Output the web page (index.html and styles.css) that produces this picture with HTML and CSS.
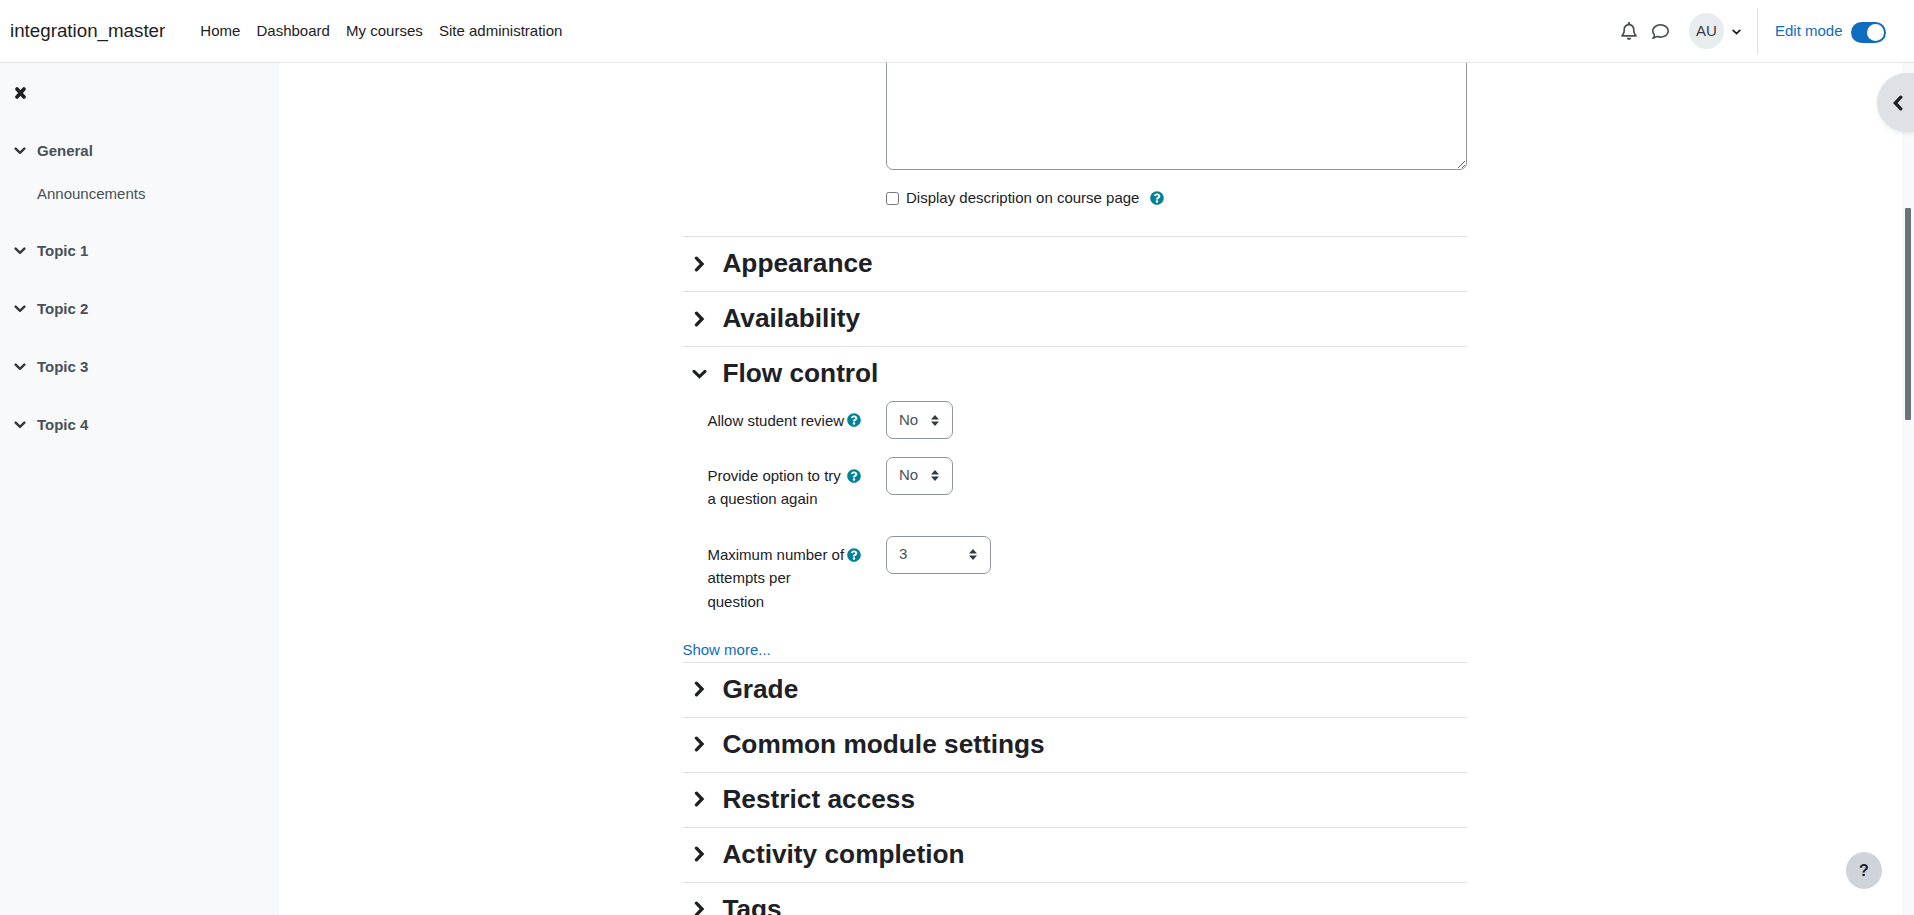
FILE: index.html
```html
<!DOCTYPE html>
<html lang="en">
<head>
<meta charset="utf-8">
<title>integration_master</title>
<link rel="stylesheet" href="styles.css">
</head>
<body>
<svg class="sprite" aria-hidden="true">
  <symbol id="chev-down" viewBox="0 0 16 10"><polyline points="2.2,2.2 8,7.8 13.8,2.2"/></symbol>
  <symbol id="chev-right" viewBox="0 0 10 16"><polyline points="2.2,2.2 7.8,8 2.2,13.8"/></symbol>
  <symbol id="chev-left" viewBox="0 0 10 16"><polyline points="7.8,2.2 2.2,8 7.8,13.8"/></symbol>
  <symbol id="help" viewBox="0 0 512 512"><path fill-rule="evenodd" d="M504 256c0 136.997-111.043 248-248 248S8 392.997 8 256C8 119.083 119.043 8 256 8s248 111.083 248 248zM262.655 90c-54.497 0-89.255 22.957-116.549 63.758-3.536 5.286-2.353 12.415 2.715 16.258l34.699 26.31c5.205 3.947 12.621 3.008 16.665-2.122 17.864-22.658 30.113-35.797 57.303-35.797 20.429 0 45.698 13.148 45.698 32.958 0 14.976-12.363 22.667-32.534 33.976C247.128 238.528 216 254.941 216 296v4c0 6.627 5.373 12 12 12h56c6.627 0 12-5.373 12-12v-1.333c0-28.462 83.186-29.647 83.186-106.667 0-58.002-60.165-102-116.531-102zM256 338c-25.365 0-46 20.635-46 46 0 25.364 20.635 46 46 46s46-20.636 46-46c0-25.365-20.635-46-46-46z"/></symbol>
</svg>

<header class="topbar">
  <a class="brand">integration_master</a>
  <nav class="primary-nav">
    <a>Home</a>
    <a>Dashboard</a>
    <a>My courses</a>
    <a>Site administration</a>
  </nav>
  <div class="usernav">
    <svg class="bell" viewBox="0 0 448 512"><path d="M224 0c-17.7 0-32 14.3-32 32V51.2C119 66 64 130.6 64 208v25.4c0 45.4-15.5 89.5-43.8 124.9L5.3 377c-5.8 7.2-6.9 17.1-2.9 25.4S14.8 416 24 416H424c9.2 0 17.6-5.3 21.6-13.6s2.9-18.2-2.9-25.4l-14.9-18.6C399.5 322.9 384 278.8 384 233.4V208c0-77.4-55-142-128-156.8V32c0-17.7-14.3-32-32-32zm0 96c61.9 0 112 50.1 112 112v25.4c0 47.9 13.9 94.6 39.7 134.6H72.3C98.1 328 112 281.3 112 233.4V208c0-61.9 50.1-112 112-112zm64 352H224 160c0 17 6.7 33.3 18.7 45.3s28.3 18.7 45.3 18.7s33.3-6.7 45.3-18.7s18.7-28.3 18.7-45.3z"/></svg>
    <svg class="comment" viewBox="0 0 512 512"><path d="M123.6 391.3c12.9-9.4 29.6-11.8 44.6-6.4c26.5 9.6 56.2 15.1 87.8 15.1c124.7 0 208-80.5 208-160s-83.3-160-208-160S48 160.5 48 240c0 32 12.4 62.8 35.7 89.2c8.6 9.7 12.8 22.5 11.8 35.5c-1.4 18.1-5.7 34.7-11.3 49.4c17-7.9 31.1-16.7 39.4-22.7zM21.2 431.9c1.8-2.7 3.5-5.4 5.1-8.1c10-16.6 19.5-38.4 21.4-62.9C17.7 326.8 0 285.1 0 240C0 125.1 114.6 32 256 32s256 93.1 256 208s-114.6 208-256 208c-37.1 0-72.3-6.4-104.1-17.9c-11.9 8.7-31.3 20.6-54.3 30.6c-15.1 6.6-32.3 12.6-50.1 16.1c-.8 .2-1.6 .3-2.4 .5c-4.4 .8-8.7 1.5-13.2 1.9c-.2 0-.5 .1-.7 .1c-5.1 .5-10.2 .8-15.3 .8c-6.5 0-12.3-3.9-14.8-9.9c-2.5-6-1.1-12.8 3.4-17.4c4.1-4.2 7.8-8.7 11.3-13.5c1.7-2.3 3.3-4.6 4.8-6.9c.1-.2 .2-.3 .3-.5z"/></svg>
    <span class="avatar">AU</span>
    <svg class="chev chev-user"><use href="#chev-down"/></svg>
    <span class="divider"></span>
    <span class="edit-label">Edit mode</span>
    <span class="switch"><span class="knob"></span></span>
  </div>
</header>

<div class="page">
  <aside class="course-index">
    <svg class="close-icon" viewBox="0 0 11 12"><path d="M2 2 9 10M9 2 2 10"/></svg>
    <ul class="sections">
      <li>
        <div class="section-title"><svg class="chev chev-index"><use href="#chev-down"/></svg>General</div>
        <div class="section-item">Announcements</div>
      </li>
      <li><div class="section-title"><svg class="chev chev-index"><use href="#chev-down"/></svg>Topic 1</div></li>
      <li><div class="section-title"><svg class="chev chev-index"><use href="#chev-down"/></svg>Topic 2</div></li>
      <li><div class="section-title"><svg class="chev chev-index"><use href="#chev-down"/></svg>Topic 3</div></li>
      <li><div class="section-title"><svg class="chev chev-index"><use href="#chev-down"/></svg>Topic 4</div></li>
    </ul>
  </aside>

  <main class="main">
    <form class="form">
      <div class="description">
        <textarea class="textarea"></textarea>
        <label class="check-row">
          <input type="checkbox">
          <span>Display description on course page</span>
          <svg class="help help-check"><use href="#help"/></svg>
        </label>
      </div>

      <section class="fieldset"><h3><span class="twisty"><svg class="chev chev-r"><use href="#chev-right"/></svg></span>Appearance</h3></section>
      <section class="fieldset"><h3><span class="twisty"><svg class="chev chev-r"><use href="#chev-right"/></svg></span>Availability</h3></section>
      <section class="fieldset">
        <h3><span class="twisty"><svg class="chev chev-d"><use href="#chev-down"/></svg></span>Flow control</h3>
        <div class="fields">
          <div class="field">
            <div class="field-label">Allow student review</div>
            <svg class="help"><use href="#help"/></svg>
            <select class="select select-short"><option>No</option></select>
          </div>
          <div class="field">
            <div class="field-label">Provide option to try a question again</div>
            <svg class="help"><use href="#help"/></svg>
            <select class="select select-short"><option>No</option></select>
          </div>
          <div class="field">
            <div class="field-label">Maximum number of attempts per question</div>
            <svg class="help"><use href="#help"/></svg>
            <select class="select select-num"><option>3</option></select>
          </div>
        </div>
        <a class="show-more">Show more...</a>
      </section>
      <section class="fieldset"><h3><span class="twisty"><svg class="chev chev-r"><use href="#chev-right"/></svg></span>Grade</h3></section>
      <section class="fieldset"><h3><span class="twisty"><svg class="chev chev-r"><use href="#chev-right"/></svg></span>Common module settings</h3></section>
      <section class="fieldset"><h3><span class="twisty"><svg class="chev chev-r"><use href="#chev-right"/></svg></span>Restrict access</h3></section>
      <section class="fieldset"><h3><span class="twisty"><svg class="chev chev-r"><use href="#chev-right"/></svg></span>Activity completion</h3></section>
      <section class="fieldset"><h3><span class="twisty"><svg class="chev chev-r"><use href="#chev-right"/></svg></span>Tags</h3></section>
    </form>
  </main>

  <div class="right-strip"></div>
</div>

<button class="drawer-toggle" type="button"><svg class="chev chev-l"><use href="#chev-left"/></svg></button>
<div class="scroll-thumb"></div>
<button class="help-fab" type="button">?</button>
</body>
</html>
```
FILE: styles.css
```css
* { box-sizing: border-box; }

html, body {
  margin: 0;
  height: 915px;
  overflow: hidden;
}

body {
  font-family: "Liberation Sans", Arial, sans-serif;
  font-size: 15px;
  line-height: 22.5px;
  color: #1d2125;
  background: #fff;
  display: flex;
  flex-direction: column;
  position: relative;
}

.sprite { display: none; }

.chev {
  display: block;
  fill: none;
  stroke: #1d2125;
  stroke-width: 3.3;
  stroke-linejoin: miter;
  stroke-linecap: round;
  overflow: visible;
}

/* Top bar */
.topbar {
  flex: none;
  height: 63px;
  display: flex;
  align-items: center;
  padding: 0 28px 0 10px;
  background: #fff;
  border-bottom: 1px solid #e3e6ea;
  position: relative;
  z-index: 2;
}

.brand {
  font-size: 18.75px;
  color: #1d2125;
  margin-right: 35px;
}

.primary-nav {
  display: flex;
  gap: 16.2px;
  color: #1d2125;
}

.usernav {
  margin-left: auto;
  display: flex;
  align-items: center;
}

.bell { width: 16px; height: 18px; fill: #495057; margin: -1px 15px 0 0; }
.comment { width: 17px; height: 17px; fill: #495057; margin: 0 20px 0 0; }

.avatar {
  width: 35px;
  height: 36px;
  border-radius: 50%;
  background: #e9ecef;
  display: flex;
  align-items: center;
  justify-content: center;
  color: #343a40;
}

.chev-user { width: 9px; height: 6px; margin: 2px 0 0 8px; }

.divider {
  width: 1px;
  height: 46px;
  background: #dee2e6;
  margin: 0 17px 0 16px;
}

.edit-label { color: #0f6cbf; margin-right: 8.5px; }

.switch {
  width: 35px;
  height: 21px;
  margin-top: 2px;
  border-radius: 11px;
  background: #0f6cbf;
  display: flex;
  align-items: center;
  justify-content: flex-end;
  padding-right: 2px;
}

.knob {
  width: 17px;
  height: 17px;
  border-radius: 50%;
  background: #fff;
}

/* Page */
.page {
  flex: 1;
  min-height: 0;
  display: flex;
}

.course-index {
  flex: none;
  width: 279px;
  background: #f8f9fa;
  padding: 24px 0 0 14px;
  color: #495057;
}

.close-icon {
  display: block;
  width: 11px;
  height: 12px;
  margin-left: 0.5px;
  fill: none;
  stroke: #1d2125;
  stroke-width: 3.6;
  stroke-linecap: round;
}

.sections {
  list-style: none;
  margin: 41px 0 0;
  padding: 0;
  display: flex;
  flex-direction: column;
  gap: 35.5px;
}

.section-title {
  display: flex;
  align-items: center;
  gap: 11px;
  font-weight: 700;
}

.chev-index { width: 12px; height: 7.5px; stroke: #343a40; margin-top: -1px; }

.section-item { margin: 20.5px 0 -1px 23px; }

.main {
  flex: 1;
  min-width: 0;
  overflow: hidden;
  display: flex;
  justify-content: center;
  padding-right: 31px;
}

.form { width: 784px; flex: none; }

.description { padding-left: 203px; margin-top: -21px; height: 194px; }

.textarea {
  display: block;
  width: 581px;
  height: 128px;
  border: 1px solid #8f959e;
  border-radius: 7px;
  background: #fff;
  margin: 0;
}

.check-row {
  display: flex;
  align-items: center;
  margin-top: 17px;
}

.check-row input { width: 13px; height: 13px; margin: 0 7px 0 0; }

.help { display: block; width: 14px; height: 14px; fill: #008196; }
.help-check { margin-left: 10.5px; }

.fieldset { border-top: 1px solid #dee2e6; }

.fieldset h3 {
  margin: 0;
  height: 54px;
  display: flex;
  align-items: center;
  padding: 0 0 1px 9px;
  font-size: 26.25px;
  line-height: 31.5px;
  font-weight: 700;
  color: #1d2125;
}

.twisty {
  flex: none;
  width: 30.4px;
  display: flex;
  padding-right: 15.4px;
  justify-content: center;
}

.chev-r { width: 10.5px; height: 16px; }
.chev-d { width: 15px; height: 10px; }

.fields { padding: 0 0 1.5px 24.4px; }

.field {
  display: grid;
  grid-template-columns: 140px 38.6px auto;
  align-items: start;
  justify-items: start;
}

.field-label {
  line-height: 23.3px;
  padding: 7.5px 0 24.9px;
}

.field .help { margin: 12.2px 0 0 -0.4px; }

.select {
  appearance: none;
  -webkit-appearance: none;
  height: 38px;
  padding: 0 13px 0 12px;
  border: 1px solid #8f959e;
  border-radius: 7px;
  font: inherit;
  color: #495057;
  background: #fff url("data:image/svg+xml,%3Csvg xmlns='http://www.w3.org/2000/svg' viewBox='0 0 8 11'%3E%3Cpath fill='%23343a40' d='M4 0 8 4.5H0zM4 11 0 6.5h8z'/%3E%3C/svg%3E") no-repeat right 13px center / 8px 11px;
}

.select-short { width: 67px; }
.select-num { width: 105px; }

.show-more { display: block; margin-left: -0.6px; color: #0f6cbf; }

.right-strip { flex: none; width: 12px; background: #f8f9fa; }

/* Overlays */
.drawer-toggle {
  position: absolute;
  left: 1877px;
  top: 73px;
  width: 37px;
  height: 59px;
  padding: 0 0 0 16px;
  border: 0;
  border-radius: 30px 0 0 30px;
  background: #dee2e6;
  box-shadow: 0 2px 4px rgba(0, 0, 0, .08);
  display: flex;
  align-items: center;
  z-index: 3;
}

.chev-l { width: 10px; height: 16px; }

.scroll-thumb {
  position: absolute;
  left: 1905px;
  top: 208px;
  width: 6px;
  height: 212px;
  background: #6a737b;
  border-radius: 1px;
}

.help-fab {
  position: absolute;
  left: 1846px;
  top: 852px;
  width: 36px;
  height: 37px;
  padding: 0;
  border: 0;
  border-radius: 50%;
  background: #ced4da;
  color: #1d2125;
  font: 700 16px "Liberation Sans", Arial, sans-serif;
}
```
